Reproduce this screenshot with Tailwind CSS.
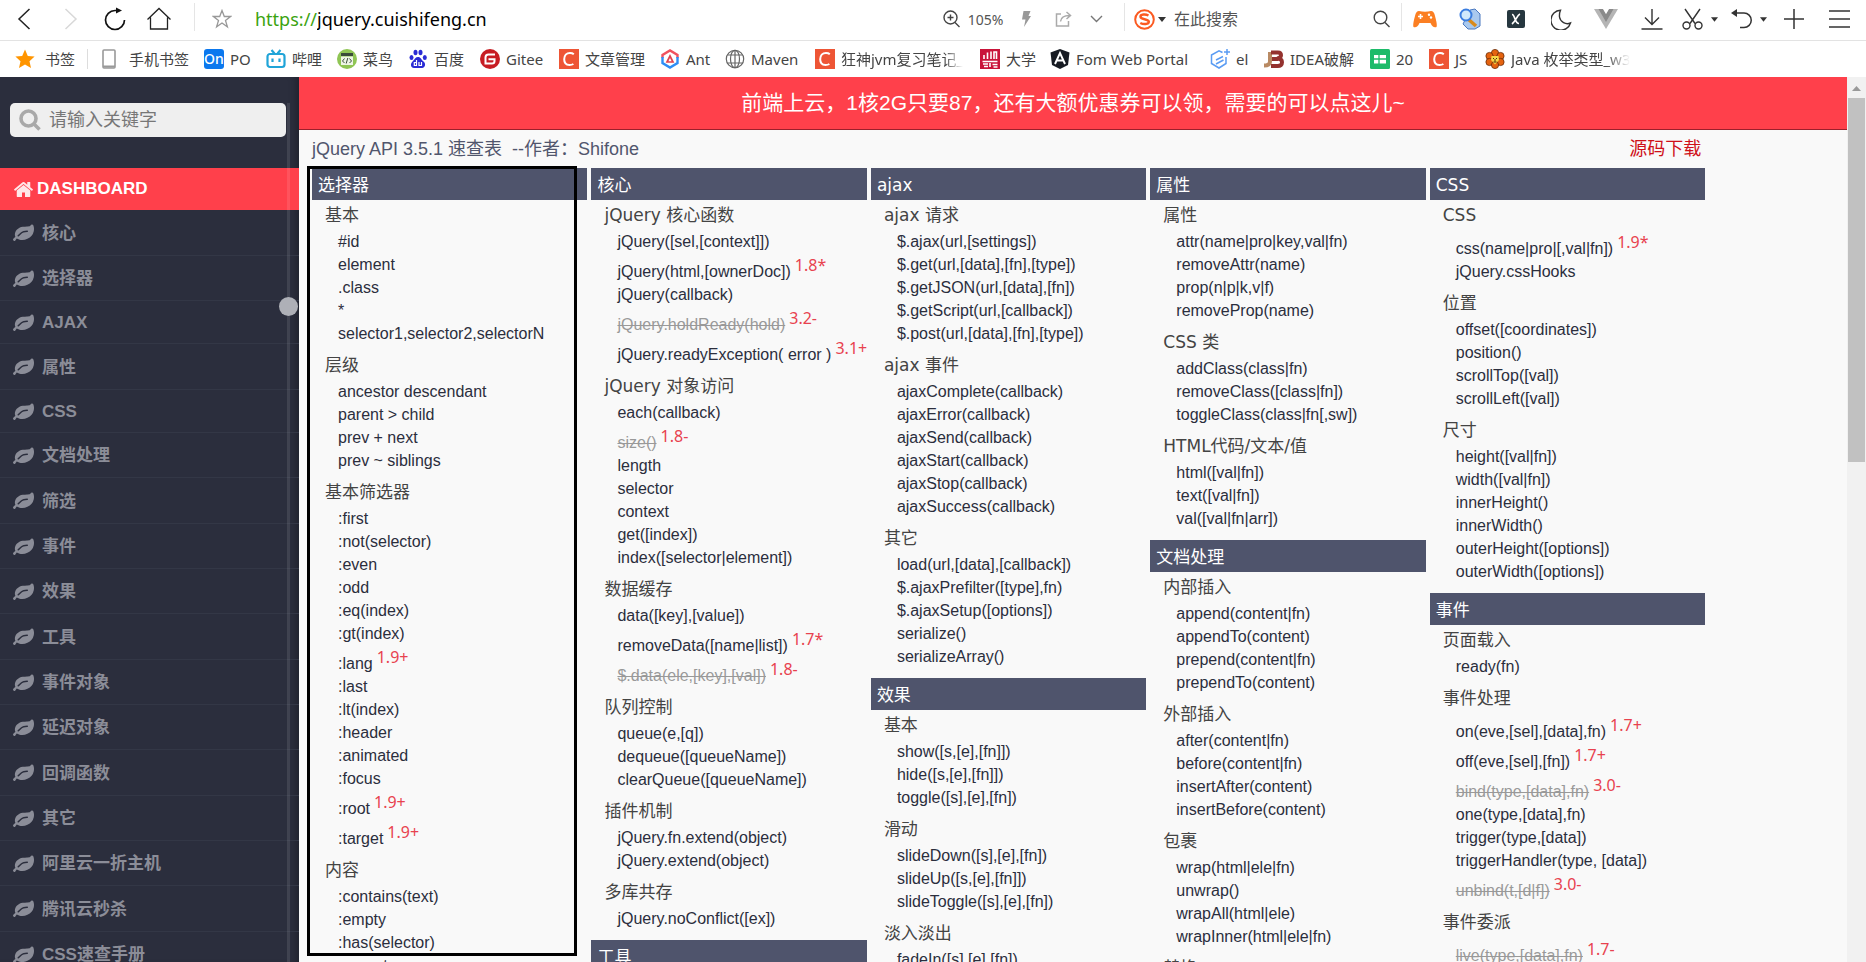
<!DOCTYPE html>
<html lang="zh-CN">
<head>
<meta charset="utf-8">
<title>jQuery API 3.5.1 速查表</title>
<script src="https://cdn.jsdelivr.net/npm/@tailwindcss/browser@4"></script>
</head>
<body class="h-screen flex flex-col overflow-hidden bg-white font-['Noto_Sans','Noto_Sans_CJK_SC',sans-serif] text-[#333]">

<svg class="hidden">
  <symbol id="leaf" viewBox="0 0 1792 1792"><path fill="currentColor" d="M1280 704q0-26-19-45t-45-19q-172 0-318 49.500t-259.500 134-235.500 219.500q-19 21-19 45 0 26 19 45t45 19q24 0 45-19 27-24 74-71t67-66q137-124 268.500-176t313.500-52q26 0 45-19t19-45zm512-198q0 95-20 193-46 224-184.500 383t-357.500 268q-214 108-438 108-148 0-286-47-15-5-88-42t-96-37q-16 0-39.500 32t-45 70-52.500 70-60 32q-43 0-63.500-17.500t-45.500-59.500q-2-4-6-11t-5.500-10-3-9.500-1.500-13.500q0-35 31-73.500t68-65.500 68-56 31-48q0-4-14-38t-16-44q-9-51-9-104 0-115 43.500-220t119-184.500 170.500-139 204-95.500q55-18 145-25.500t179.500-9 178.500-6 163.500-24 113.500-56.500l29.500-29.500 29.500-28 27-20 36.500-16 43.500-4.500q39 0 70.500 46t47.500 112 24 124 8 96z"/></symbol>
  <symbol id="csdn" viewBox="0 0 20 20"><rect width="20" height="20" fill="#ee5535"/><path d="M14.800 5.200C13.600 4.200 12.200 4 11 4 7.500 4 5.200 6.600 5.200 10.300 5.200 14 7.300 16 10.400 16c1.500 0 2.900-.3 4-1" fill="none" stroke="#fff" stroke-width="2"/></symbol>
  <symbol id="caret" viewBox="0 0 8 5"><path d="M0 0h8L4 5z" fill="#333"/></symbol>
</svg>

<!-- Browser toolbar -->
<header class="shrink-0">
  <div class="h-[41px] pb-[2px] flex items-center border-b border-[#e3e3e3] [&_button]:h-9 [&_button]:shrink-0 [&_button]:flex [&_button]:items-center [&_button]:justify-center">
    <button class="w-12" aria-label="后退"><svg width="14" height="22" viewBox="0 0 14 22" fill="none" stroke="#222" stroke-width="1.500"><path d="M12.500 1L2 11l10.500 10"/></svg></button>
    <button class="w-[46px]" aria-label="前进"><svg width="14" height="22" viewBox="0 0 14 22" fill="none" stroke="#d8d8d8" stroke-width="1.500"><path d="M1.500 1L12 11 1.500 21"/></svg></button>
    <button class="w-[41px]" aria-label="刷新"><svg width="22" height="24" viewBox="0 0 22 24" fill="none" stroke="#111" stroke-width="1.700"><path d="M20.500 13a9.500 9.500 0 1 1-9.500-9.500h3"/><path d="M12 .5l6 3-6 3z" fill="#111" stroke="none"/></svg></button>
    <button class="w-12" aria-label="主页"><svg width="26" height="24" viewBox="0 0 26 24" fill="none" stroke="#222" stroke-width="1.300"><path d="M1.500 12.500L13 1.500l11.500 11M4.500 10.500v11.500h17V10.500"/></svg></button>
    <span class="ml-[11px] mt-[-4px] w-px h-7 shrink-0 bg-[#e5e5e5]"></span>
    <button class="w-[53px]" aria-label="收藏"><svg width="20" height="20" viewBox="0 0 20 20" fill="none" stroke="#999" stroke-width="1.300"><path d="M10 1.500l2.300 6h6.200l-5 3.900 1.900 6.400L10 14l-5.400 3.800 1.900-6.400-5-3.900h6.200z"/></svg></button>
    <label class="flex-1 min-w-0 flex items-center pl-[7px] text-[18px] leading-6"><span class="text-[#3ba310]">https://</span><input class="flex-1 min-w-0 outline-none text-black" aria-label="地址" value="jquery.cuishifeng.cn"></label>
    <button class="w-[66px] gap-2 text-[14px] text-[#555]"><svg width="17" height="18" viewBox="0 0 17 18" fill="none" stroke="#444" stroke-width="1.400"><circle cx="7.500" cy="7.500" r="6.500"/><path d="M12 12.500l4.500 4.500M4.500 7.500h6M7.500 4.500v6"/></svg>105%</button>
    <button class="w-[41px]" aria-label="极速"><svg width="11" height="18" viewBox="0 0 11 18"><path d="M2.500 1h7L7.500 6H10L3 17l1.500-7.500H1z" fill="#999"/></svg></button>
    <button class="w-8" aria-label="分享"><svg width="17" height="16" viewBox="0 0 17 16" fill="none" stroke="#aaa" stroke-width="1.500"><path d="M6 3H1.500v12h12V10M5.500 10.500C6 6 9 4.500 14.500 4.500M11.500 1l4 3.500-4 3.500"/></svg></button>
    <button class="w-[35px]" aria-label="更多"><svg width="13" height="8" viewBox="0 0 13 8" fill="none" stroke="#777" stroke-width="1.400"><path d="M1 1l5.500 5.500L12 1"/></svg></button>
    <span class="ml-[10px] mt-[-4px] w-px h-7 shrink-0 bg-[#e5e5e5]"></span>
    <label class="w-[239px] shrink-0 flex items-center pl-[9px] text-[16px] leading-6">
      <svg width="21" height="21" viewBox="0 0 21 21" fill="none"><circle cx="10.500" cy="10.500" r="9.300" stroke="#fb5a21" stroke-width="2"/><path d="M14.500 6.500c-3-1.500-8-1.300-8 1.300 0 3.200 8.300 1.500 8.300 5 0 2.700-5.300 2.800-8.500 1.200" stroke="#fb5a21" stroke-width="2.500"/></svg>
      <svg class="ml-[3px] w-2 h-[5px]"><use href="#caret"/></svg>
      <input class="ml-2 w-40 outline-none placeholder:text-[#555]" aria-label="搜索" placeholder="在此搜索">
    </label>
    <button class="w-[35px]" aria-label="查找"><svg width="17" height="18" viewBox="0 0 17 18" fill="none" stroke="#444" stroke-width="1.400"><circle cx="7.500" cy="7.500" r="6.300"/><path d="M12 12.500l4.500 4.500"/></svg></button>
    <span class="ml-[2px] mt-[-4px] w-px h-7 shrink-0 bg-[#e5e5e5]"></span>
    <button class="w-[46px]" aria-label="游戏"><svg width="24" height="18" viewBox="0 0 24 18"><path d="M6 1Q12 2.500 18 1q3 0 4 5 2.500 9 1.500 11-3.500 1.500-6-4h-11q-2.500 5.500-6 4-1-2 1.500-11Q3 1 6 1z" fill="#fb7f23"/><path d="M7.500 4v5M5 6.500h5" stroke="#fff" stroke-width="1.600"/><circle cx="16" cy="4.800" r="1.200" fill="#fff"/><circle cx="18" cy="7.500" r="1.200" fill="#fff"/></svg></button>
    <button class="w-[45px]" aria-label="搜索工具"><svg width="23" height="22" viewBox="0 0 23 22"><path d="M11 2l5-1 5 5v12l-5 3H9l-5-5z" fill="#a9c9ee" stroke="#4a78c0" stroke-width="1"/><path d="M9 11l8 7" stroke="#d98a1c" stroke-width="3.500"/><circle cx="7" cy="7" r="5.500" fill="#cfe8fb" stroke="#3a7de0" stroke-width="2"/></svg></button>
    <button class="w-[45px]" aria-label="扩展"><svg width="18" height="18" viewBox="0 0 18 18"><rect width="18" height="18" rx="2" fill="#26373f"/><path d="M5 4.500c3-.5 2.500 9 7 9M13 4c-3 1-4 7-8 10" fill="none" stroke="#fff" stroke-width="1.700"/></svg></button>
    <button class="w-[46px]" aria-label="夜间模式"><svg width="21" height="21" viewBox="0 0 21 21" fill="none" stroke="#333" stroke-width="1.400"><path d="M9.500 1.200A10 10 0 1 0 19.500 14 8 8 0 0 1 8.500 8q-.3-4 1-6.800z"/></svg></button>
    <button class="w-[43px]" aria-label="Vue"><svg width="24" height="20" viewBox="0 0 24 20"><path d="M0 0h24L12 20z" fill="#b5b5b5"/><path d="M4.500 0H9l3 5 3-5h4.500L12 13z" fill="#8a8a8a"/><path d="M9 0h6l-3 5z" fill="#fff"/></svg></button>
    <button class="w-[49px]" aria-label="下载"><svg width="22" height="21" viewBox="0 0 22 21" fill="none" stroke="#333" stroke-width="1.400"><path d="M11 0v15M4 8.500l7 7 7-7M.5 20h21"/></svg></button>
    <button class="w-8" aria-label="截图"><svg width="21" height="22" viewBox="0 0 21 22" fill="none" stroke="#333" stroke-width="1.400"><path d="M3 1l10 14.500M18 1L8 15.500"/><circle cx="4.500" cy="17.500" r="3.500"/><circle cx="16.500" cy="17.500" r="3.500"/></svg></button>
    <button class="w-3" aria-label="截图选项"><svg class="w-[7px] h-[5px]"><use href="#caret"/></svg></button>
    <button class="ml-[7px] w-[30px]" aria-label="恢复"><svg width="22" height="20" viewBox="0 0 22 20" fill="none" stroke="#333" stroke-width="1.500"><path d="M3 4h10a7 7 0 0 1 0 14.500H9"/><path d="M0 4l6-4v8z" fill="#333" stroke="none"/></svg></button>
    <button class="w-3" aria-label="恢复选项"><svg class="w-[7px] h-[5px]"><use href="#caret"/></svg></button>
    <button class="w-[50px]" aria-label="新建"><svg width="20" height="20" viewBox="0 0 20 20" stroke="#333" stroke-width="1.500"><path d="M10 0v20M0 10h20"/></svg></button>
    <button class="w-10 mr-[7px]" aria-label="菜单"><svg width="21" height="18" viewBox="0 0 21 18" stroke="#333" stroke-width="1.500"><path d="M0 1h21M0 9h21M0 17h21"/></svg></button>
  </div>

  <!-- Bookmarks bar -->
  <nav class="h-9 pl-[15px] flex items-center text-[15px] leading-5 whitespace-nowrap text-[#444] [&>a]:shrink-0 [&>a]:flex [&>a]:items-center [&>a]:gap-[6px] [&_svg]:shrink-0">
    <a href="#" class="w-[72px]"><svg class="mr-1" width="20" height="20" viewBox="0 0 20 20"><path d="M10 .5l2.800 6.400 6.800.7-5.100 4.600 1.500 6.800-6-3.600L4 19l1.500-6.800L.4 7.600l6.800-.7z" fill="#ff9500"/></svg>书签</a>
    <span class="w-px h-5 bg-[#ddd]"></span>
    <a href="#" class="w-[116px] pl-[14px]"><svg class="mr-[7px]" width="14" height="20" viewBox="0 0 14 20"><rect x="1" y="1" width="12" height="18" rx="1" fill="none" stroke="#999" stroke-width="1.600"/><path d="M1 17.500h12" stroke="#999" stroke-width="2"/></svg>手机书签</a>
    <a href="#" class="w-[62px]"><span class="w-5 h-5 rounded-[3px] bg-[#0b78ee] text-white text-[14px] font-medium text-center">On</span>PO</a>
    <a href="#" class="w-[71px]"><svg width="20" height="20" viewBox="0 0 20 20" fill="none" stroke="#20a4d8" stroke-width="2.200"><rect x="1.500" y="5" width="17" height="13" rx="2.500"/><path d="M5.500 1l3 3.500M14.500 1l-3 3.500M6.500 9.500v3.500M13.500 9.500v3.500"/></svg>哔哩</a>
    <a href="#" class="w-[71px]"><svg width="20" height="20" viewBox="0 0 20 20"><circle cx="10" cy="10" r="10" fill="#8fc554"/><rect x="4" y="4" width="12" height="3" fill="#394b39"/><rect x="4" y="7.500" width="12" height="8.500" fill="#eef5e6"/><path d="M7.500 9.500L5.500 12l2 2M12.500 9.500l2 2.500-2 2M10.800 9l-1.600 5.500" fill="none" stroke="#394b39"/></svg>菜鸟</a>
    <a href="#" class="w-[72px]"><svg width="20" height="20" viewBox="0 0 20 20" fill="#2a2bd4"><ellipse cx="3.500" cy="8.500" rx="2" ry="2.600"/><ellipse cx="7.500" cy="3.500" rx="2" ry="2.800"/><ellipse cx="12.500" cy="3.500" rx="2" ry="2.800"/><ellipse cx="16.800" cy="8.500" rx="2" ry="2.600"/><path d="M10 8c3 0 3 2.500 5.500 4.500s2 6-1.500 6.500H6C2.500 18.500 2 15 4.500 12.500S7.500 8 10 8z"/><path d="M8.500 11v5.500H6.300v-3h2M11 13v3.500h2.500V13" fill="none" stroke="#fff" stroke-width="1.200"/></svg>百度</a>
    <a href="#" class="w-[79px]"><svg width="20" height="20" viewBox="0 0 20 20"><circle cx="10" cy="10" r="10" fill="#c71d23"/><path d="M15 5.500H8.500Q5.500 5.500 5.500 8.500V14.500h6.500q2.500 0 2.500-2.500v-1.800H8.500" fill="none" stroke="#fff" stroke-width="2"/></svg>Gitee</a>
    <a href="#" class="w-[101px]"><svg width="20" height="20"><use href="#csdn"/></svg>文章管理</a>
    <a href="#" class="w-[65px]"><svg width="20" height="20" viewBox="0 0 20 20" fill="none"><path d="M2.500 9V6L10 1.500 17.500 6v3" stroke="#f0525f" stroke-width="2.400"/><path d="M2.500 8v6l7.500 4.500 7.500-4.500V8" stroke="#2d8df5" stroke-width="2.400"/><path d="M7 13l3-6 3 6z" stroke="#e0444f" stroke-width="1.700"/></svg>Ant</a>
    <a href="#" class="w-[90px]"><svg width="20" height="20" viewBox="0 0 20 20" fill="none" stroke="#666" stroke-width="1.200"><circle cx="10" cy="10" r="8.700"/><ellipse cx="10" cy="10" rx="4.500" ry="8.700"/><path d="M2.500 6h15M2.500 14h15M10 1.300v17.400"/></svg>Maven</a>
    <a href="#" class="w-[165px]"><svg width="20" height="20"><use href="#csdn"/></svg><span class="w-[122px] mask-r-from-85%">狂神jvm复习笔记_</span></a>
    <a href="#" class="w-[70px]"><svg width="20" height="20" viewBox="0 0 20 20"><rect width="20" height="20" fill="#c9143a"/><path d="M4 10V6M7.500 10V3.500M11 10V2.500M14 10V3h2.500v7M2.500 12.500h15M3 15h5M4 17.500h4M10 14v4M12.500 15.500h5M13.500 18h4" stroke="#fff" stroke-width="1.600" fill="none"/></svg>大学</a>
    <a href="#" class="w-[160px]"><svg width="20" height="20" viewBox="0 0 20 20"><path d="M10 0l9.500 3.500L18 16l-8 4-8-4L.5 3.500z" fill="#161a22"/><path d="M5 15L10 4l5 11M7 11.500h6" fill="none" stroke="#fff" stroke-width="1.900"/></svg>Fom Web Portal</a>
    <a href="#" class="w-[54px]"><svg width="20" height="20" viewBox="0 0 20 20" fill="none" stroke="#5a9cf3" stroke-width="1.500"><path d="M12.500 3.500L9 1.800 1.500 6v8.500L9 19l7-4.500V8"/><path d="M13 7.500L6 11M13.500 11L6 15M17 0v6M14 3h6"/></svg>el</a>
    <a href="#" class="w-[106px]"><svg width="20" height="20" viewBox="0 0 20 20" fill="none" stroke-width="4"><path d="M6 3v9.500q0 4-6 4" stroke="#b98a63"/><path d="M7 3.500h7q3 0 3 2.800T13 9.500q5 0 5 3.800t-4.500 3.700H7M8 10h6" stroke="#94322f"/></svg>IDEA破解</a>
    <a href="#" class="w-[59px]"><svg width="20" height="20" viewBox="0 0 20 20"><rect width="20" height="20" rx="1.500" fill="#1dbb6a"/><path d="M4 6h12v8.500H4z" fill="#fff"/><path d="M4 10h12M9 6v9" stroke="#1dbb6a" stroke-width="1.300"/></svg>20</a>
    <a href="#" class="w-14"><svg width="20" height="20"><use href="#csdn"/></svg>JS</a>
    <a href="#" class="w-[150px]"><svg width="20" height="20" viewBox="0 0 20 20"><g fill="#e5630f" stroke="#6b2c08" stroke-width=".8"><circle cx="10" cy="4" r="3.600"/><circle cx="4.500" cy="7" r="3.600"/><circle cx="15.500" cy="7" r="3.600"/><circle cx="4.500" cy="13" r="3.600"/><circle cx="15.500" cy="13" r="3.600"/><circle cx="10" cy="16" r="3.600"/></g><path d="M6.500 7h7l.5 4-4 4.500L6 11z" fill="#f6d648"/><path d="M8 9.500h1M11 9.500h1M10 10v2.500M8.500 13h3" stroke="#4b2a08"/></svg><span class="mask-r-from-80%">Java 枚举类型_w3</span></a>
  </nav>
</header>

<div class="flex-1 min-h-0 flex font-['Liberation_Sans','Noto_Sans_CJK_SC',sans-serif]">

  <!-- Sidebar -->
  <aside class="relative w-[299px] shrink-0 overflow-hidden bg-[#2b2e3d] shadow-[inset_-8px_0_8px_-6px_rgba(0,0,0,0.3)]">
    <label class="mt-[26px] ml-[10px] w-[276px] h-[34px] px-[9px] flex items-center gap-2 rounded-[5px] bg-[#efefef]">
      <svg width="22" height="22" viewBox="0 0 22 22" fill="none" stroke="#a9a9a9" stroke-width="3.600"><circle cx="9.500" cy="9.500" r="7.500"/><path d="M15 15l5.500 5.500"/></svg>
      <input class="flex-1 min-w-0 text-[18px] leading-6 outline-none placeholder:text-[#777]" aria-label="关键字" placeholder="请输入关键字">
    </label>
    <nav class="mt-[31px] text-[17px] font-bold text-[#8b8d98] [&_li>a]:flex [&_li>a]:items-center [&_li>a]:h-full [&_li>a]:pt-[2px] [&_li>a]:pl-[13px] [&_li>a]:gap-2 [&_svg]:shrink-0 [&_li]:h-[45px] [&_li]:border-b [&_li]:border-[#333746] [&_li:nth-child(3n+1)]:h-[46px]">
      <a href="#" class="h-[42px] pl-[13px] flex items-center gap-[3px] bg-[#ff404b] text-white"><svg width="21" height="21" viewBox="0 0 1792 1792" fill="#ffe9ea"><path d="M1472 992v480q0 26-19 45t-45 19h-384v-384h-256v384h-384q-26 0-45-19t-19-45v-480q0-1 .5-3t.5-3l575-474 575 474q1 2 1 6zm223-69l-62 74q-8 9-21 11h-3q-13 0-21-7l-692-577-692 577q-12 8-24 7-13-2-21-11l-62-74q-8-10-7-23.500t11-21.500l719-599q32-26 76-26t76 26l244 204v-195q0-14 9-23t23-9h192q14 0 23 9t9 23v408l219 182q10 8 11 21.500t-7 23.500z"/></svg>DASHBOARD</a>
      <ul>
        <li><a href="#"><svg width="21" height="21"><use href="#leaf"/></svg>核心</a></li>
        <li><a href="#"><svg width="21" height="21"><use href="#leaf"/></svg>选择器</a></li>
        <li class="max-h-[43px]"><a href="#"><svg width="21" height="21"><use href="#leaf"/></svg>AJAX</a></li>
        <li><a href="#"><svg width="21" height="21"><use href="#leaf"/></svg>属性</a></li>
        <li class="max-h-[43px]"><a href="#"><svg width="21" height="21"><use href="#leaf"/></svg>CSS</a></li>
        <li><a href="#"><svg width="21" height="21"><use href="#leaf"/></svg>文档处理</a></li>
        <li><a href="#"><svg width="21" height="21"><use href="#leaf"/></svg>筛选</a></li>
        <li><a href="#"><svg width="21" height="21"><use href="#leaf"/></svg>事件</a></li>
        <li><a href="#"><svg width="21" height="21"><use href="#leaf"/></svg>效果</a></li>
        <li><a href="#"><svg width="21" height="21"><use href="#leaf"/></svg>工具</a></li>
        <li><a href="#"><svg width="21" height="21"><use href="#leaf"/></svg>事件对象</a></li>
        <li><a href="#"><svg width="21" height="21"><use href="#leaf"/></svg>延迟对象</a></li>
        <li><a href="#"><svg width="21" height="21"><use href="#leaf"/></svg>回调函数</a></li>
        <li><a href="#"><svg width="21" height="21"><use href="#leaf"/></svg>其它</a></li>
        <li><a href="#"><svg width="21" height="21"><use href="#leaf"/></svg>阿里云一折主机</a></li>
        <li><a href="#"><svg width="21" height="21"><use href="#leaf"/></svg>腾讯云秒杀</a></li>
        <li><a href="#"><svg width="21" height="21"><use href="#leaf"/></svg>CSS速查手册</a></li>
      </ul>
    </nav>
    <!-- Slim scroll rail and its round handle -->
    <div class="absolute right-[9px] top-[26px] bottom-0 w-[3px] bg-white/10"></div>
    <div class="absolute right-[1px] top-[220px] w-[19px] h-[19px] rounded-full bg-[#aeb0b7]"></div>
  </aside>

  <!-- Page -->
  <main class="relative flex-1 min-w-0 overflow-hidden bg-[#f9f9f9]">
    <a href="#" class="h-[53px] flex items-center justify-center border-b border-[#9b1f2b] bg-[#ff404b] text-white text-[21px] leading-8">前端上云，1核2G只要87，还有大额优惠券可以领，需要的可以点这儿~</a>
    <div class="w-9/10 ml-[13px]">
      <div class="h-[38px] pr-1 flex items-center justify-between text-[18px] leading-6">
        <h1 class="text-[#51566d] whitespace-pre">jQuery API 3.5.1 速查表  --作者：Shifone</h1>
        <a href="#" class="text-[#cf1018]">源码下载</a>
      </div>

      <div class="grid grid-cols-5 gap-1 items-start whitespace-nowrap text-[16px] leading-[23px] text-[#2b2e3d]
        [&_h2]:h-8 [&_h2]:pl-[6px] [&_h2]:bg-[#4f546c] [&_h2]:text-white [&_h2]:text-[17px] [&_h2]:leading-[34px] [&_h2]:font-['DejaVu_Sans','Noto_Sans_CJK_SC',sans-serif]
        [&_h3]:h-[30px] [&_h3]:pl-[13px] [&_h3]:text-[17px] [&_h3]:leading-[30px] [&_h3]:text-[#444] [&_h3]:font-['DejaVu_Sans','Noto_Sans_CJK_SC',sans-serif]
        [&_section]:mb-[10px] [&_ul]:mb-[5px] [&_ul]:pl-[26px] [&_li]:flex [&_li]:items-end [&_li]:gap-1 [&_li]:h-[23px] [&_li:has(sup)]:h-[30px]
        [&_sup]:static [&_sup]:self-start [&_sup]:text-[16px] [&_sup]:leading-6 [&_sup]:text-[#e8424f] [&_sup]:font-['Noto_Sans',sans-serif]
        [&_del]:text-[#999]">

        <div>
          <section>
            <h2>选择器</h2>
            <h3>基本</h3>
            <ul><li><a href="#">#id</a></li><li><a href="#">element</a></li><li><a href="#">.class</a></li><li><a href="#">*</a></li><li><a href="#">selector1,selector2,selectorN</a></li></ul>
            <h3>层级</h3>
            <ul><li><a href="#">ancestor descendant</a></li><li><a href="#">parent &gt; child</a></li><li><a href="#">prev + next</a></li><li><a href="#">prev ~ siblings</a></li></ul>
            <h3>基本筛选器</h3>
            <ul><li><a href="#">:first</a></li><li><a href="#">:not(selector)</a></li><li><a href="#">:even</a></li><li><a href="#">:odd</a></li><li><a href="#">:eq(index)</a></li><li><a href="#">:gt(index)</a></li><li><a href="#">:lang</a><sup>1.9+</sup></li><li><a href="#">:last</a></li><li><a href="#">:lt(index)</a></li><li><a href="#">:header</a></li><li><a href="#">:animated</a></li><li><a href="#">:focus</a></li><li><a href="#">:root</a><sup>1.9+</sup></li><li><a href="#">:target</a><sup>1.9+</sup></li></ul>
            <h3>内容</h3>
            <ul><li><a href="#">:contains(text)</a></li><li><a href="#">:empty</a></li><li><a href="#">:has(selector)</a></li><li><a href="#">:parent</a></li></ul>
          </section>
        </div>

        <div>
          <section>
            <h2>核心</h2>
            <h3>jQuery 核心函数</h3>
            <ul><li><a href="#">jQuery([sel,[context]])</a></li><li><a href="#">jQuery(html,[ownerDoc])</a><sup>1.8*</sup></li><li><a href="#">jQuery(callback)</a></li><li><a href="#"><del>jQuery.holdReady(hold)</del></a><sup>3.2-</sup></li><li><a href="#">jQuery.readyException( error )</a><sup>3.1+</sup></li></ul>
            <h3>jQuery 对象访问</h3>
            <ul><li><a href="#">each(callback)</a></li><li><a href="#"><del>size()</del></a><sup>1.8-</sup></li><li><a href="#">length</a></li><li><a href="#">selector</a></li><li><a href="#">context</a></li><li><a href="#">get([index])</a></li><li><a href="#">index([selector|element])</a></li></ul>
            <h3>数据缓存</h3>
            <ul><li><a href="#">data([key],[value])</a></li><li><a href="#">removeData([name|list])</a><sup>1.7*</sup></li><li><a href="#"><del>$.data(ele,[key],[val])</del></a><sup>1.8-</sup></li></ul>
            <h3>队列控制</h3>
            <ul><li><a href="#">queue(e,[q])</a></li><li><a href="#">dequeue([queueName])</a></li><li><a href="#">clearQueue([queueName])</a></li></ul>
            <h3>插件机制</h3>
            <ul><li><a href="#">jQuery.fn.extend(object)</a></li><li><a href="#">jQuery.extend(object)</a></li></ul>
            <h3>多库共存</h3>
            <ul><li><a href="#">jQuery.noConflict([ex])</a></li></ul>
          </section>
          <section>
            <h2>工具</h2>
          </section>
        </div>

        <div>
          <section>
            <h2>ajax</h2>
            <h3>ajax 请求</h3>
            <ul><li><a href="#">$.ajax(url,[settings])</a></li><li><a href="#">$.get(url,[data],[fn],[type])</a></li><li><a href="#">$.getJSON(url,[data],[fn])</a></li><li><a href="#">$.getScript(url,[callback])</a></li><li><a href="#">$.post(url,[data],[fn],[type])</a></li></ul>
            <h3>ajax 事件</h3>
            <ul><li><a href="#">ajaxComplete(callback)</a></li><li><a href="#">ajaxError(callback)</a></li><li><a href="#">ajaxSend(callback)</a></li><li><a href="#">ajaxStart(callback)</a></li><li><a href="#">ajaxStop(callback)</a></li><li><a href="#">ajaxSuccess(callback)</a></li></ul>
            <h3>其它</h3>
            <ul><li><a href="#">load(url,[data],[callback])</a></li><li><a href="#">$.ajaxPrefilter([type],fn)</a></li><li><a href="#">$.ajaxSetup([options])</a></li><li><a href="#">serialize()</a></li><li><a href="#">serializeArray()</a></li></ul>
          </section>
          <section>
            <h2>效果</h2>
            <h3>基本</h3>
            <ul><li><a href="#">show([s,[e],[fn]])</a></li><li><a href="#">hide([s,[e],[fn]])</a></li><li><a href="#">toggle([s],[e],[fn])</a></li></ul>
            <h3>滑动</h3>
            <ul><li><a href="#">slideDown([s],[e],[fn])</a></li><li><a href="#">slideUp([s,[e],[fn]])</a></li><li><a href="#">slideToggle([s],[e],[fn])</a></li></ul>
            <h3>淡入淡出</h3>
            <ul><li><a href="#">fadeIn([s],[e],[fn])</a></li></ul>
          </section>
        </div>

        <div>
          <section>
            <h2>属性</h2>
            <h3>属性</h3>
            <ul><li><a href="#">attr(name|pro|key,val|fn)</a></li><li><a href="#">removeAttr(name)</a></li><li><a href="#">prop(n|p|k,v|f)</a></li><li><a href="#">removeProp(name)</a></li></ul>
            <h3>CSS 类</h3>
            <ul><li><a href="#">addClass(class|fn)</a></li><li><a href="#">removeClass([class|fn])</a></li><li><a href="#">toggleClass(class|fn[,sw])</a></li></ul>
            <h3>HTML代码/文本/值</h3>
            <ul><li><a href="#">html([val|fn])</a></li><li><a href="#">text([val|fn])</a></li><li><a href="#">val([val|fn|arr])</a></li></ul>
          </section>
          <section>
            <h2>文档处理</h2>
            <h3>内部插入</h3>
            <ul><li><a href="#">append(content|fn)</a></li><li><a href="#">appendTo(content)</a></li><li><a href="#">prepend(content|fn)</a></li><li><a href="#">prependTo(content)</a></li></ul>
            <h3>外部插入</h3>
            <ul><li><a href="#">after(content|fn)</a></li><li><a href="#">before(content|fn)</a></li><li><a href="#">insertAfter(content)</a></li><li><a href="#">insertBefore(content)</a></li></ul>
            <h3>包裹</h3>
            <ul><li><a href="#">wrap(html|ele|fn)</a></li><li><a href="#">unwrap()</a></li><li><a href="#">wrapAll(html|ele)</a></li><li><a href="#">wrapInner(html|ele|fn)</a></li></ul>
            <h3>替换</h3>
          </section>
        </div>

        <div>
          <section>
            <h2>CSS</h2>
            <h3>CSS</h3>
            <ul><li><a href="#">css(name|pro|[,val|fn])</a><sup>1.9*</sup></li><li><a href="#">jQuery.cssHooks</a></li></ul>
            <h3>位置</h3>
            <ul><li><a href="#">offset([coordinates])</a></li><li><a href="#">position()</a></li><li><a href="#">scrollTop([val])</a></li><li><a href="#">scrollLeft([val])</a></li></ul>
            <h3>尺寸</h3>
            <ul><li><a href="#">height([val|fn])</a></li><li><a href="#">width([val|fn])</a></li><li><a href="#">innerHeight()</a></li><li><a href="#">innerWidth()</a></li><li><a href="#">outerHeight([options])</a></li><li><a href="#">outerWidth([options])</a></li></ul>
          </section>
          <section>
            <h2>事件</h2>
            <h3>页面载入</h3>
            <ul><li><a href="#">ready(fn)</a></li></ul>
            <h3>事件处理</h3>
            <ul><li><a href="#">on(eve,[sel],[data],fn)</a><sup>1.7+</sup></li><li><a href="#">off(eve,[sel],[fn])</a><sup>1.7+</sup></li><li><a href="#"><del>bind(type,[data],fn)</del></a><sup>3.0-</sup></li><li><a href="#">one(type,[data],fn)</a></li><li><a href="#">trigger(type,[data])</a></li><li><a href="#">triggerHandler(type, [data])</a></li><li><a href="#"><del>unbind(t,[d|f])</del></a><sup>3.0-</sup></li></ul>
            <h3>事件委派</h3>
            <ul><li><a href="#"><del>live(type,[data],fn)</del></a><sup>1.7-</sup></li></ul>
          </section>
        </div>
      </div>
    </div>
    <!-- Frame drawn over the selector column -->
    <div class="absolute left-2 top-[89px] bottom-[6px] w-[270px] border-3 border-black pointer-events-none"></div>
  </main>

  <!-- Page scrollbar -->
  <div class="w-[19px] shrink-0 bg-[#f1f1f1] flex flex-col items-center">
    <svg class="mt-[9px] mb-[7px]" width="9" height="5" viewBox="0 0 9 5"><path d="M4.500 0L9 5H0z" fill="#999"/></svg>
    <div class="w-[17px] h-[364px] bg-[#c1c1c1]"></div>
  </div>
</div>
</body>
</html>
